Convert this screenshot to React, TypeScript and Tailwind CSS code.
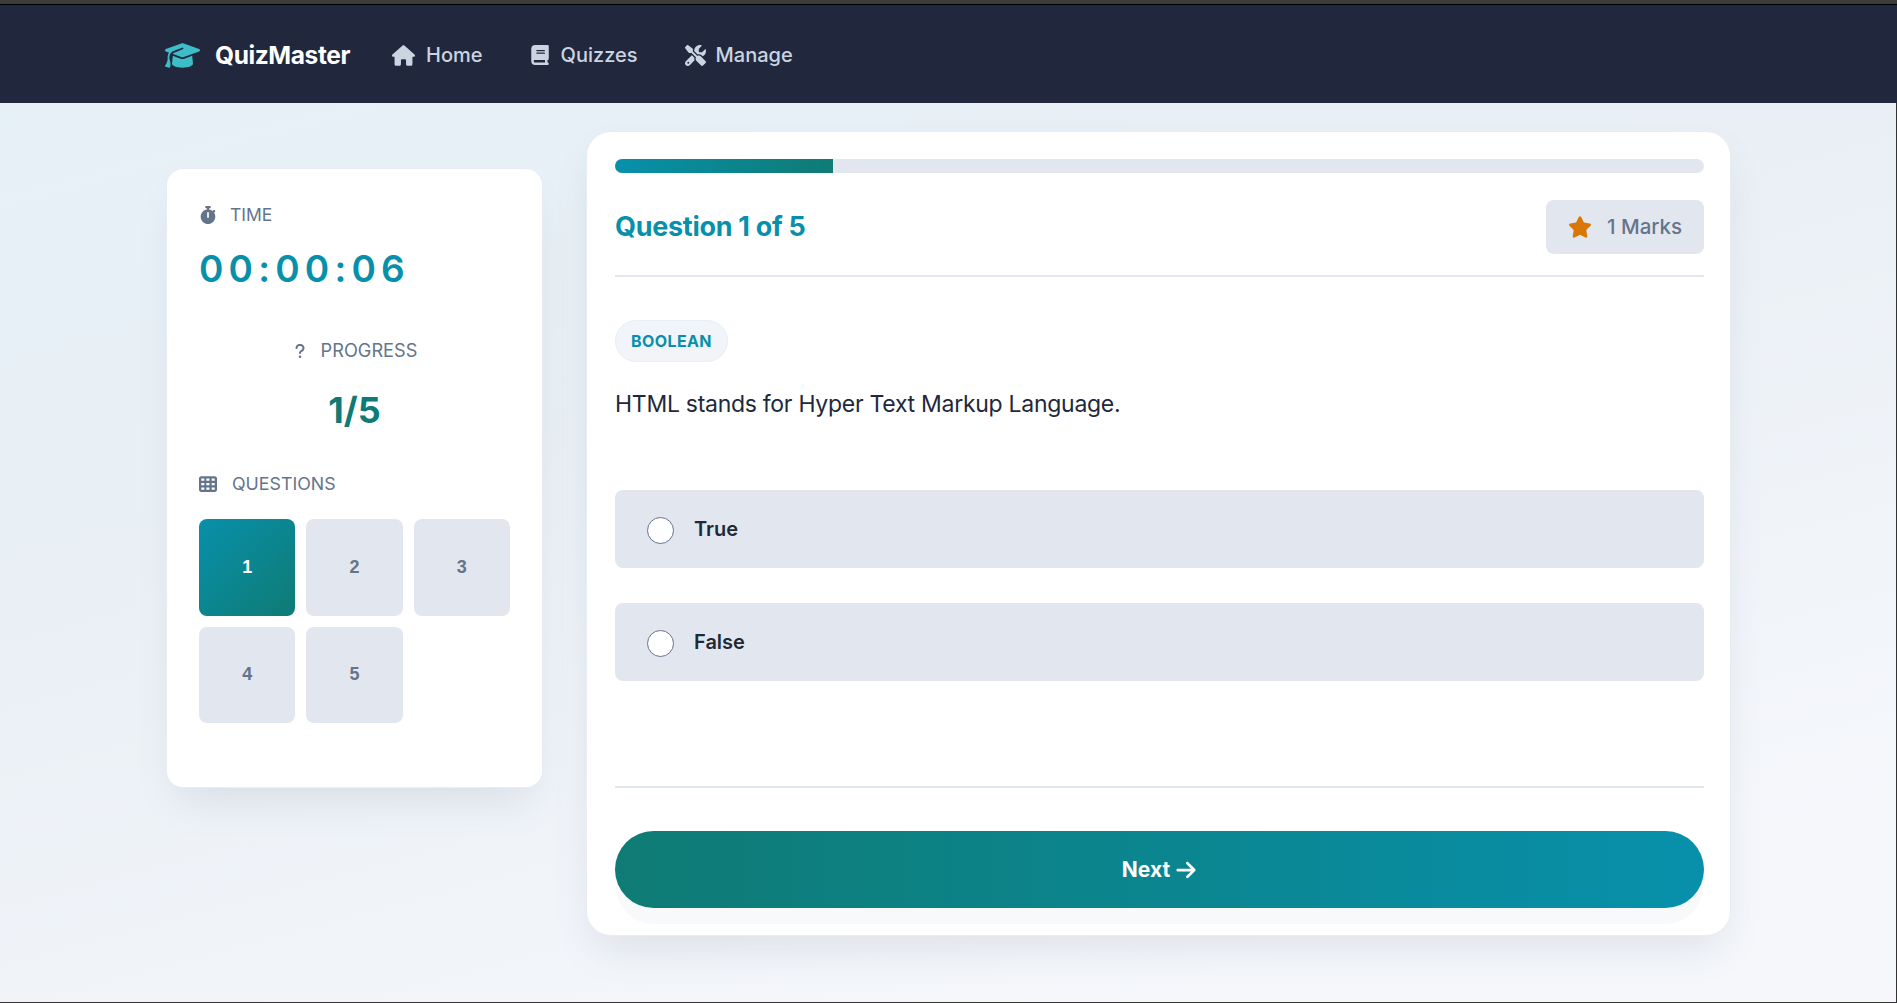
import {
  FaArrowRight,
  FaBook,
  FaGraduationCap,
  FaHouse,
  FaQuestion,
  FaScrewdriverWrench,
  FaStar,
  FaStopwatch,
  FaTableCells,
} from "react-icons/fa6";

const NAV_LINKS = [
  { label: "Home", icon: FaHouse, iconClass: "text-[23px]", gap: "gap-[11px]" },
  { label: "Quizzes", icon: FaBook, iconClass: "text-[20px]", gap: "gap-[11px]" },
  { label: "Manage", icon: FaScrewdriverWrench, iconClass: "text-[21px]", gap: "gap-[10px]" },
];

const QUESTION_NUMBERS = [1, 2, 3, 4, 5];

function Navbar() {
  return (
    <nav className="flex h-[98px] shrink-0 items-center bg-[#21283e] pt-[2px] pl-[165px]">
      <FaGraduationCap className="text-[35px] text-[#3dbdc7]" />
      <span className="ml-[15px] text-[24.5px] font-bold tracking-[-0.4px] text-white">QuizMaster</span>
      <div className="ml-[42px] flex items-center gap-[47px]">
        {NAV_LINKS.map((link) => (
          <a key={link.label} className={`flex items-center text-[20px] font-medium text-[#cbd5e1] ${link.gap}`}>
            <link.icon className={link.iconClass} />
            {link.label}
          </a>
        ))}
      </div>
    </nav>
  );
}

function Sidebar() {
  return (
    <aside className="mt-[66px] h-[618px] w-[375px] shrink-0 rounded-2xl bg-white px-[32px] pt-[33px] shadow-[0_0_0_1px_#e9edf3,0_24px_40px_-12px_rgba(100,116,139,0.16)]">
      <div className="flex items-center gap-[13px] text-[17.5px] text-[#64748b]">
        <FaStopwatch className="text-[18px]" />
        TIME
      </div>
      <div className="mt-[16px] text-[37px] leading-[50px] font-semibold tracking-[5.2px] text-[#0890ab]">00:00:06</div>

      <div className="mt-[43px] flex items-center justify-center gap-[13px] text-[18.2px] text-[#64748b]">
        <FaQuestion className="text-[16px]" />
        PROGRESS
      </div>
      <div className="mt-[20px] text-center text-[36px] leading-[50px] font-bold text-[#0f7b74]">1/5</div>

      <div className="mt-[36px] flex items-center gap-[15px] text-[17.8px] text-[#64748b]">
        <FaTableCells className="text-[18px]" />
        QUESTIONS
      </div>
      <div className="mt-[22px] grid grid-cols-3 gap-[11px] font-['Liberation_Sans',sans-serif] text-[18px] font-bold">
        {QUESTION_NUMBERS.map((num) => (
          <button
            key={num}
            className={`flex aspect-square items-center justify-center rounded-lg ${
              num === 1 ? "bg-linear-to-br from-[#0890ab] to-[#0f7b74] text-white" : "bg-[#e2e7ef] text-[#64748b]"
            }`}
          >
            {num}
          </button>
        ))}
      </div>
    </aside>
  );
}

function QuestionCard() {
  return (
    <section className="mt-[29px] h-[803px] w-[1143px] shrink-0 rounded-3xl bg-white pt-[27px] pr-[26px] pl-[28px] shadow-[0_0_0_1px_#e9edf3,0_20px_40px_-8px_rgba(100,116,139,0.16)]">
      <div className="h-[14px] overflow-hidden rounded-full bg-[#e2e7ef]">
        <div className="h-full w-1/5 bg-linear-to-r from-[#0890ab] to-[#0f7b74]" />
      </div>

      <div className="mt-[27px] flex h-[77px] items-start justify-between border-b-2 border-[#e2e7ef]">
        <h2 className="pt-[8px] text-[27px] leading-[38px] font-bold tracking-[-0.3px] text-[#0890ab]">Question 1 of 5</h2>
        <div className="flex h-[54px] w-[158px] items-center justify-center gap-[15px] rounded-lg bg-[#e2e7ef] text-[20.5px] font-medium text-[#64748b]">
          <FaStar className="text-[24px] text-[#d97706]" />
          1 Marks
        </div>
      </div>

      <span className="mt-[43px] flex h-[42px] w-[113px] items-center justify-center rounded-full border border-[#e8eef5] bg-[#f1f5f9] text-[16px] font-bold tracking-[0.4px] text-[#0890ab]">
        BOOLEAN
      </span>
      <p className="mt-[24px] text-[23px] leading-[36px] tracking-[-0.28px] text-[#1e293b]">
        HTML stands for Hyper Text Markup Language.
      </p>

      <div className="mt-[68px] flex flex-col gap-[35px]">
        {["True", "False"].map((option) => (
          <label key={option} className="flex h-[78px] items-center gap-[20px] rounded-lg bg-[#e2e7ef] px-[32px] text-[20px] font-semibold text-[#1e293b]">
            <span className="mt-[3px] size-[27px] rounded-full border border-[#64748b] bg-white" />
            {option}
          </label>
        ))}
      </div>

      <div className="mt-[105px] border-t-2 border-[#e2e7ef]" />

      <button className="mt-[43px] flex h-[77px] w-full items-center justify-center gap-[5px] rounded-full bg-linear-to-r from-[#0f7b74] to-[#0890ab] text-[21px] font-bold text-white shadow-[0_17px_0_-1px_#f7f9fb]">
        Next
        <FaArrowRight className="text-[22px]" />
      </button>
    </section>
  );
}

export default function App() {
  return (
    <div className="flex h-[1003px] flex-col overflow-hidden bg-[#f5f7fb] font-['Inter',sans-serif]">
      <div className="h-[5px] shrink-0 border-b border-black bg-[#3c3c3c]" />
      <Navbar />
      <main className="flex flex-1 items-start gap-[45px] border-r border-[#333] bg-[linear-gradient(165deg,#e6f1f7_0%,#e9eff5_35%,#f5f7fb_85%)] pr-[166px] pl-[167px]">
        <Sidebar />
        <QuestionCard />
      </main>
      <div className="h-px shrink-0 bg-[#333]" />
    </div>
  );
}
